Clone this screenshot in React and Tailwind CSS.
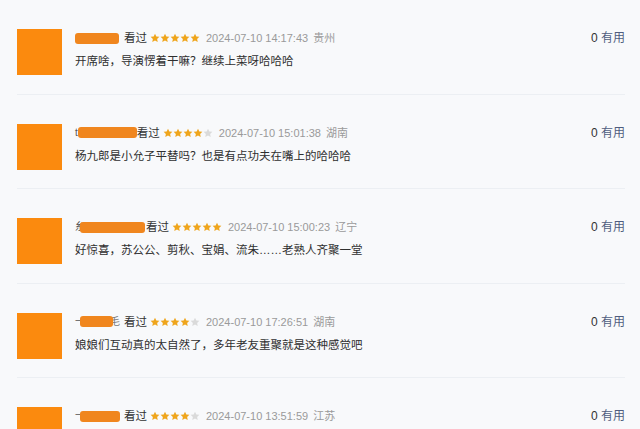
const reviews = [
  {
    prefix: "",
    blob: 44,
    gap: 5,
    stars: 5,
    time: "2024-07-10 14:17:43",
    place: "贵州",
    text: "开席啥，导演愣着干嘛？继续上菜呀哈哈哈",
  },
  {
    prefix: "t",
    pull: 0,
    blob: 59,
    gap: 0,
    stars: 4,
    time: "2024-07-10 15:01:38",
    place: "湖南",
    text: "杨九郎是小允子平替吗？也是有点功夫在嘴上的哈哈哈",
  },
  {
    prefix: "糸",
    pull: -5,
    blob: 65,
    gap: 1,
    stars: 5,
    time: "2024-07-10 15:00:23",
    place: "辽宁",
    text: "好惊喜，苏公公、剪秋、宝娟、流朱……老熟人齐聚一堂",
  },
  {
    prefix: "一",
    pull: -5,
    blob: 33,
    suffix: "毛",
    gap: 4,
    stars: 4,
    time: "2024-07-10 17:26:51",
    place: "湖南",
    text: "娘娘们互动真的太自然了，多年老友重聚就是这种感觉吧",
  },
  {
    prefix: "一",
    pull: -5,
    blob: 40,
    gap: 4,
    stars: 4,
    time: "2024-07-10 13:51:59",
    place: "江苏",
    text: "",
  },
];

const Star = ({ on }) => (
  <svg width="10" height="10" viewBox="0 0 24 24" className="block">
    <path
      d="M12 1.5l3.2 6.7 7.3.9-5.4 5.1 1.4 7.3L12 18l-6.5 3.5 1.4-7.3-5.4-5.1 7.3-.9z"
      fill={on ? "#efa51c" : "#dadada"}
    />
  </svg>
);

const Row = ({ r }) => (
  <div className="flex items-start pt-[29px] pb-[18.5px] border-b border-[#eceff3] ml-[17px] mr-[15px]">
    {/* Avatar */}
    <div className="w-[45px] h-[46px] bg-[#fb8a0e] shrink-0" />

    <div className="flex-1 ml-[13px]">
      {/* Header */}
      <div className="flex items-center h-[18px] text-[11.5px] leading-[18px]">
        {r.prefix && (
          <span className="text-[#555] text-[10px] whitespace-nowrap">{r.prefix}</span>
        )}
        {/* masked nickname */}
        <span
          className="relative z-10 h-[11px] rounded-[3px] bg-[#f0861e] shrink-0"
          style={{ width: r.blob, marginLeft: r.pull || 0 }}
        />
        {r.suffix && (
          <span className="text-[#777] text-[10px] -ml-[3px] whitespace-nowrap">
            {r.suffix}
          </span>
        )}
        <span className="text-[#333]" style={{ marginLeft: r.suffix ? 4 : r.gap }}>
          看过
        </span>
        <span className="ml-[3px] flex">
          {[0, 1, 2, 3, 4].map((i) => (
            <Star key={i} on={i < r.stars} />
          ))}
        </span>
        <span className="ml-[6px] text-[#9a9a9a] text-[11px]">{r.time}</span>
        <span className="ml-[5px] text-[#9a9a9a] text-[11px]">{r.place}</span>
        <span className="ml-auto text-[12px] text-[#333]">
          0 <span className="text-[#4f5d7e]">有用</span>
        </span>
      </div>

      {/* Comment */}
      {r.text && (
        <div className="mt-[5px] text-[11.5px] leading-[18px] text-[#2f2f2f]">
          {r.text}
        </div>
      )}
    </div>
  </div>
);

export default function App() {
  return (
    <div
      className="w-[640px] h-[429px] overflow-hidden bg-[#f8f9fb]"
      style={{ fontFamily: '"Liberation Sans", "Noto Sans CJK SC", sans-serif' }}
    >
      {reviews.map((r, i) => (
        <Row key={i} r={r} />
      ))}
    </div>
  );
}
